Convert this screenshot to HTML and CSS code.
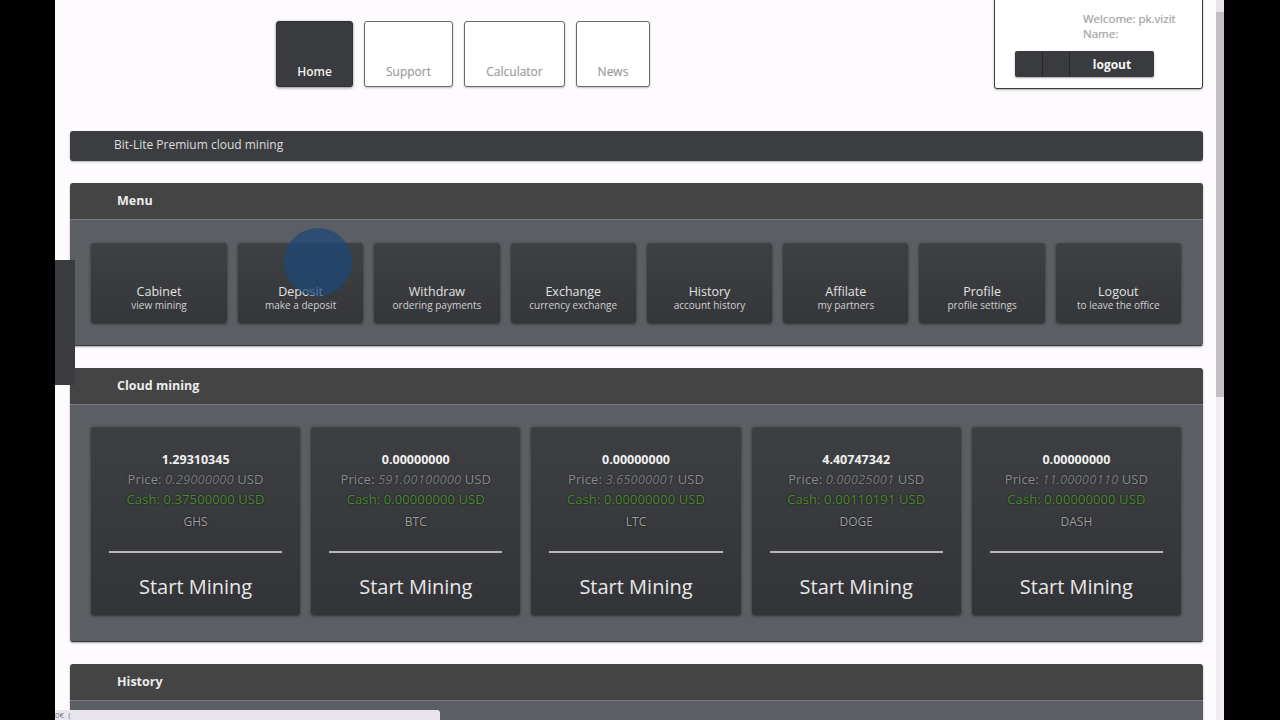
FILE: index.html
```html
<!DOCTYPE html>
<html>
<head>
<meta charset="utf-8">
<link rel="stylesheet" href="styles.css">
</head>
<body>
<div class="screen">
  <div class="gutter-left"></div>
  <div class="page">
    <div class="side-tab"></div>
    <div class="click-dot"></div>
    <div class="container">
      <header class="header">
        <nav class="nav">
          <a class="nav-btn active nav-home">Home</a>
          <a class="nav-btn nav-support">Support</a>
          <a class="nav-btn nav-calc">Calculator</a>
          <a class="nav-btn nav-news">News</a>
        </nav>
        <div class="welcome">
          <div class="welcome-text">Welcome: pk.vizit<br>Name:</div>
          <div class="logout-bar">
            <span class="seg seg-a"></span><span class="seg seg-b"></span><span class="seg seg-c">logout</span>
          </div>
        </div>
      </header>

      <div class="title-bar">Bit-Lite Premium cloud mining</div>

      <section class="panel">
        <div class="panel-head">Menu</div>
        <div class="panel-body menu-grid">
          <div class="tile"><div class="t">Cabinet</div><div class="s">view mining</div></div>
          <div class="tile"><div class="t">Deposit</div><div class="s">make a deposit</div></div>
          <div class="tile"><div class="t">Withdraw</div><div class="s">ordering payments</div></div>
          <div class="tile"><div class="t">Exchange</div><div class="s">currency exchange</div></div>
          <div class="tile"><div class="t">History</div><div class="s">account history</div></div>
          <div class="tile"><div class="t">Affilate</div><div class="s">my partners</div></div>
          <div class="tile"><div class="t">Profile</div><div class="s">profile settings</div></div>
          <div class="tile"><div class="t">Logout</div><div class="s">to leave the office</div></div>
        </div>
      </section>

      <section class="panel">
        <div class="panel-head">Cloud mining</div>
        <div class="panel-body mining-grid">
          <div class="card">
            <div class="amount">1.29310345</div>
            <div class="price">Price: <i>0.29000000</i> USD</div>
            <div class="cash">Cash: 0.37500000 USD</div>
            <div class="cur">GHS</div>
            <div class="rule"></div>
            <div class="start">Start Mining</div>
          </div>
          <div class="card">
            <div class="amount">0.00000000</div>
            <div class="price">Price: <i>591.00100000</i> USD</div>
            <div class="cash">Cash: 0.00000000 USD</div>
            <div class="cur">BTC</div>
            <div class="rule"></div>
            <div class="start">Start Mining</div>
          </div>
          <div class="card">
            <div class="amount">0.00000000</div>
            <div class="price">Price: <i>3.65000001</i> USD</div>
            <div class="cash">Cash: 0.00000000 USD</div>
            <div class="cur">LTC</div>
            <div class="rule"></div>
            <div class="start">Start Mining</div>
          </div>
          <div class="card">
            <div class="amount">4.40747342</div>
            <div class="price">Price: <i>0.00025001</i> USD</div>
            <div class="cash">Cash: 0.00110191 USD</div>
            <div class="cur">DOGE</div>
            <div class="rule"></div>
            <div class="start">Start Mining</div>
          </div>
          <div class="card">
            <div class="amount">0.00000000</div>
            <div class="price">Price: <i>11.00000110</i> USD</div>
            <div class="cash">Cash: 0.00000000 USD</div>
            <div class="cur">DASH</div>
            <div class="rule"></div>
            <div class="start">Start Mining</div>
          </div>
        </div>
      </section>

      <section class="panel">
        <div class="panel-head">History</div>
        <div class="panel-body history-body"></div>
      </section>
    </div>
    <div class="status-bar">0€ &nbsp;(</div>
  </div>
  <div class="scrollbar"><div class="sb-arrow"></div><div class="sb-thumb"></div></div>
  <div class="gutter-right"></div>
</div>
</body>
</html>
```

FILE: styles.css
```css
* { box-sizing: border-box; }
html, body { margin: 0; padding: 0; }
body {
  background: #000;
  font-family: "Open Sans", "Noto Sans", sans-serif;
  width: 1280px;
  height: 720px;
  overflow: hidden;
}
.screen { display: flex; height: 720px; }
.gutter-left { width: 55px; background: #000; flex: none; }
.gutter-right { flex: 1; background: #000; }
.page {
  width: 1161px;
  flex: none;
  height: 720px;
  background: #fdfbfd;
  position: relative;
  overflow: hidden;
}
.scrollbar {
  width: 8px;
  flex: none;
  background: #f1ecf1;
  display: flex;
  flex-direction: column;
}
.sb-arrow { height: 12px; background: #e9e4e9; }
.sb-thumb { height: 385px; background: #c3bec3; }

.container { margin: 0 13px 0 15px; }

/* header */
.header { display: flex; align-items: flex-start; height: 131px; }
.nav { display: flex; gap: 11px; margin: 21px 0 0 206px; }
.nav-btn {
  height: 66px;
  display: flex;
  align-items: flex-end;
  justify-content: center;
  padding-bottom: 6px;
  font-size: 12px;
  color: #9a9a9a;
  background: #fff;
  border: 1px solid #6a6a6a;
  border-radius: 3px;
  box-shadow: 0 1px 2px rgba(0,0,0,0.25);
  text-shadow: 0 0 1px rgba(0,0,0,0.15);
}
.nav-home { width: 77px; }
.nav-support { width: 89px; }
.nav-calc { width: 101px; }
.nav-news { width: 74px; }
.nav-btn.active {
  background: #3b3c3f;
  border-color: #2e2f31;
  color: #f2f2f2;
  font-weight: 600;
  padding-bottom: 6px;
  box-shadow: 0 1px 3px rgba(0,0,0,0.45);
}

.welcome {
  margin-left: auto;
  margin-top: -4px;
  width: 209px;
  height: 93px;
  background: #fff;
  border: 1px solid #3a3a3a;
  border-radius: 0 0 3px 3px;
  box-shadow: 0 1px 2px rgba(0,0,0,0.3);
  padding: 14px 0 0 20px;
}
.welcome-text {
  padding-left: 68px;
  font-size: 11.5px;
  line-height: 15px;
  color: #a8a8a8;
  text-shadow: 0 0 1px rgba(0,0,0,0.25);
}
.logout-bar {
  margin-top: 10px;
  display: flex;
  width: 139px;
  height: 26px;
  background: #3a3b3e;
  border-radius: 2px;
  box-shadow: 0 1px 2px rgba(0,0,0,0.35);
  overflow: hidden;
}
.seg { height: 100%; display: flex; align-items: center; justify-content: center; }
.seg-a { width: 28px; border-right: 1px solid #2a2a2c; }
.seg-b { width: 27px; border-right: 1px solid #2a2a2c; }
.seg-c { flex: 1; color: #f4f4f4; font-weight: 700; font-size: 12px; }

/* title bar */
.title-bar {
  height: 30px;
  background: #3c3d40;
  border-radius: 3px;
  box-shadow: 0 1px 2px rgba(0,0,0,0.3);
  color: #dedede;
  font-size: 12px;
  line-height: 28px;
  padding-left: 44px;
}

/* panels */
.panel {
  margin-top: 22px;
  border-radius: 3px;
  overflow: hidden;
  box-shadow: 0 1px 2px rgba(0,0,0,0.35);
}
.panel-head {
  height: 37px;
  background: #444444;
  border-bottom: 1px solid #7a7c80;
  color: #ececec;
  font-weight: 700;
  font-size: 12.5px;
  line-height: 35px;
  padding-left: 47px;
}
.panel-body {
  background: #5b5e63;
  border-bottom: 1px solid #38393b;
}
.menu-grid {
  display: grid;
  grid-template-columns: 136px repeat(7, 1fr);
  gap: 11px;
  padding: 23px 22px 22px 21px;
}
.tile {
  height: 80px;
  background: linear-gradient(#3f4044, #35363a);
  border-radius: 3px;
  box-shadow: 0 1px 3px rgba(0,0,0,0.5);
  display: flex;
  flex-direction: column;
  justify-content: flex-end;
  align-items: center;
  padding-bottom: 11px;
  text-align: center;
}
.tile .t { font-size: 12.5px; color: #e2e2e2; line-height: 15px; }
.tile .s { font-size: 10px; color: #d0d0d0; line-height: 13px; }

.mining-grid {
  display: grid;
  grid-template-columns: repeat(5, 1fr);
  gap: 11px;
  padding: 21px 22px 26px 21px;
}
.card {
  height: 189px;
  background: linear-gradient(#3e3f43, #333437);
  border-radius: 3px;
  box-shadow: 0 1px 3px rgba(0,0,0,0.5);
  border-top: 1px solid #55575b;
  display: flex;
  flex-direction: column;
  align-items: center;
  padding: 24px 18px 0;
  text-align: center;
}
.amount { font-size: 12.5px; font-weight: 700; color: #f0f0f0; line-height: 18px; }
.price {
  font-size: 13px; color: #8c8c8c; line-height: 20px;
  letter-spacing: 0.1px;
  text-shadow: 0 0 2px rgba(0,0,0,0.6);
}
.price i { color: #7a7a7a; }
.cash {
  font-size: 13px; color: #4f8a31; line-height: 20px;
  letter-spacing: 0.1px;
  text-shadow: 0 0 2px rgba(0,0,0,0.8);
}
.cur {
  font-size: 12px; color: #a0a0a0; line-height: 22px;
  margin-top: 2px;
  text-shadow: 0 0 2px rgba(0,0,0,0.8);
}
.rule {
  align-self: stretch;
  height: 2px;
  background: #b7b7b9;
  margin-top: 18px;
}
.start {
  margin-top: 21px;
  font-size: 20px;
  color: #e8e8e8;
  line-height: 26px;
}

.history-body { height: 40px; }

/* overlays */
.side-tab {
  position: absolute;
  left: 0; top: 260px;
  width: 20px; height: 125px;
  background: #3a3b3e;
  z-index: 3;
}
.click-dot {
  position: absolute;
  left: 229px; top: 228px;
  width: 68px; height: 68px;
  border-radius: 50%;
  background: rgba(28, 72, 120, 0.72);
  z-index: 3;
}
.status-bar {
  position: absolute;
  left: 0; bottom: 0;
  width: 385px; height: 10px;
  background: #e9e5ed;
  border-radius: 0 3px 0 0;
  font-size: 8px;
  line-height: 10px;
  color: #777;
  overflow: hidden;
  z-index: 3;
}
```
